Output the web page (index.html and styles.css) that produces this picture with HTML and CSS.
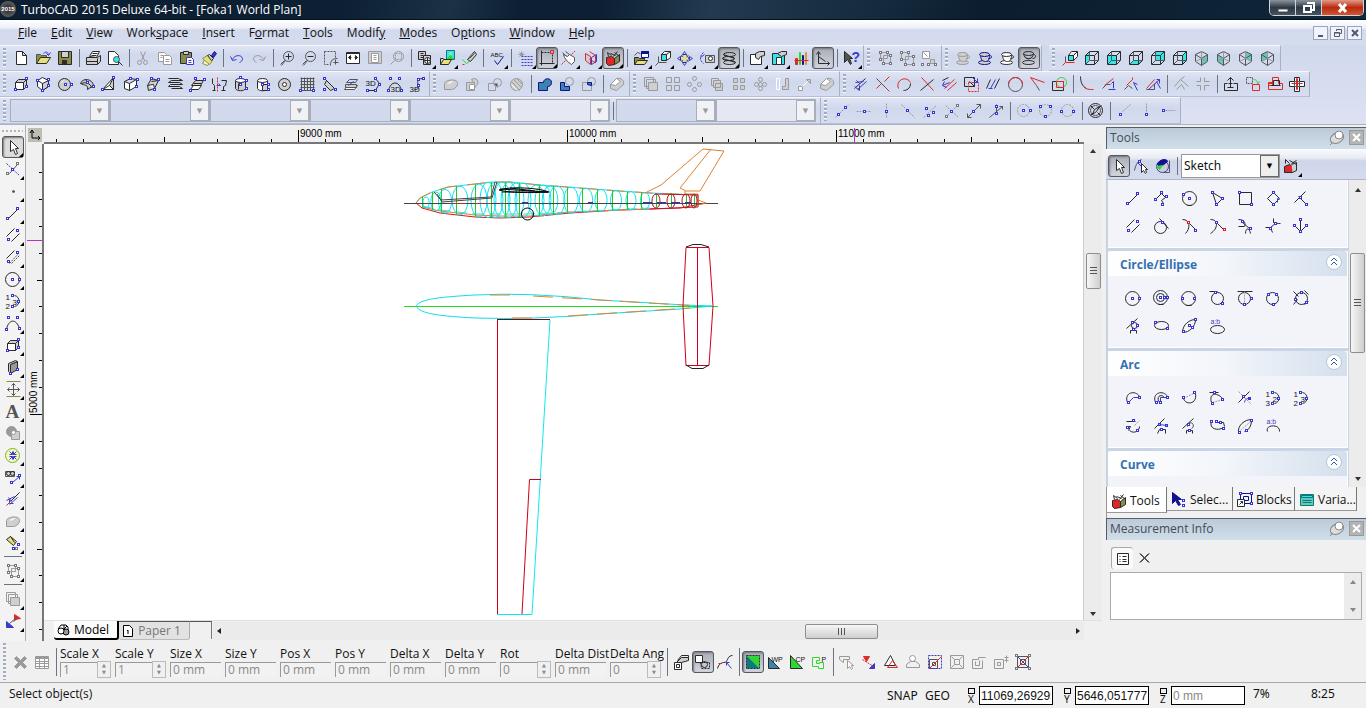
FILE: index.html
```html
<!DOCTYPE html>
<html lang="en">
<head>
<meta charset="utf-8">
<title>TurboCAD 2015 Deluxe 64-bit - [Foka1 World Plan]</title>
<link rel="stylesheet" href="styles.css">
</head>
<body>
<div class="app">
  <header class="titlebar">
    <span class="logo">2015</span>
    <h1 class="title">TurboCAD 2015 Deluxe 64-bit - [Foka1 World Plan]</h1>
    <div class="wincontrols">
      <button class="win" aria-label="Minimize"><svg width="14" height="12"><path d="M2 7h10v3H2z" fill="#fff" stroke="#444"/></svg></button>
      <button class="win" aria-label="Restore"><svg width="14" height="13"><path d="M5 2h7v7H9M2 5h7v6H2z" fill="none" stroke="#fff" stroke-width="2"/></svg></button>
      <button class="win close" aria-label="Close"><svg width="14" height="12"><path d="M3 2l7 8M10 2l-7 8" stroke="#fff" stroke-width="3"/></svg></button>
    </div>
  </header>

  <nav class="menubar" aria-label="Menu">
    <a href="#"><u>F</u>ile</a><a href="#"><u>E</u>dit</a><a href="#"><u>V</u>iew</a><a href="#">Work<u>s</u>pace</a><a href="#"><u>I</u>nsert</a><a href="#">F<u>o</u>rmat</a><a href="#"><u>T</u>ools</a><a href="#">Modif<u>y</u></a><a href="#"><u>M</u>odes</a><a href="#">O<u>p</u>tions</a><a href="#"><u>W</u>indow</a><a href="#"><u>H</u>elp</a>
    <div class="mdi">
      <button aria-label="Minimize document"><svg width="12" height="12"><path d="M3 9h5" stroke="#557" stroke-width="2"/></svg></button>
      <button aria-label="Restore document"><svg width="12" height="12"><path d="M4.500 4V2.500h5v4H8M2.500 5.500h5v4h-5zM2 6h6" fill="none" stroke="#557"/></svg></button>
      <button aria-label="Close document"><svg width="12" height="12"><path d="M3 3l6 6M9 3l-6 6" stroke="#557" stroke-width="2"/></svg></button>
    </div>
  </nav>

  <div class="bars">
    <div class="row">
      <div class="bar" data-tools="new open save | print preview | cut copy paste brush | undo redo | zoomin zoomout zoomwin extents page full | views&gt; image&gt; pick | spell&gt; | grid&gt; ortho*&gt; hand&gt; planes&gt; toolbox*&gt; | folder&gt; ucs&gt; orbit&gt; camera&gt; spring*&gt; | sheet&gt; sheet2&gt; palette axes* | help&gt;"></div>
      <div class="bar" data-tools="group ungroup explode"></div>
      <div class="bar" data-tools="cupgrey cupblue cup cupwire*"></div>
      <div class="bar spaced" data-tools="ucs2 cubeleft cubefront cubebottom cubeback cuberight iso1 iso2 iso3 iso4"></div>
    </div>
    <div class="row">
      <div class="bar" data-tools="box rotbox sphere torus2 wedge prism revolve helix sweep glass cyl cyl2 torus mesh tri stack d3line d3curve d3spline"></div>
      <div class="bar" data-tools="blob bsub bint hatchball | union subtract intersect | fillet3d"></div>
      <div class="bar" data-tools="copies array radial copies2 array2 radial2 mirrorg scaleg fillet3d"></div>
      <div class="bar" data-tools="offset trim arcred cross multi stretch parallel circlered angle over | filletc chamf1 chamf2 chamf3 | meetg crossg | lift align stamp pill"></div>
    </div>
    <div class="row">
      <div class="bar combos">
        <span class="combo"><select disabled aria-label="Layer"></select></span>
        <span class="combo"><select disabled aria-label="Color"></select></span>
        <span class="combo"><select disabled aria-label="Style"></select></span>
        <span class="combo"><select disabled aria-label="Width"></select></span>
        <span class="combo"><select disabled aria-label="Pattern"></select></span>
        <span class="combo pale"><select disabled aria-label="Brush"></select></span>
        <span class="sep"></span>
        <span class="combo"><select disabled aria-label="Material"></select></span>
        <span class="combo pale"><select disabled aria-label="Workplane"></select></span>
      </div>
      <div class="bar" data-tools="sn1 sn2 sn3 sn4 sn5 sn6 sn7 sn8 | sc1 sc2 sc3 | compass | sn9 sn10 sn11"></div>
    </div>
  </div>

  <main class="main">
    <div class="side" data-tools="arrow*&gt; snapx&gt; dot&gt; line&gt; dbl&gt; dbldash&gt; circ&gt; arc123&gt; curve&gt; box&gt; slab&gt; move&gt; text&gt; bool&gt; target&gt; cam2&gt; offset2&gt; blob&gt; flash&gt; | group&gt; | copies&gt; swap&gt;"></div>

    <section class="doc" aria-label="Drawing">
      <div class="corner"><svg width="14" height="14"><path d="M4 3v7h8M2 5l2-3 2 3M10 8l2 2-2 2" fill="none" stroke="#000"/></svg></div>
      <svg class="hruler" id="hruler" aria-hidden="true"></svg>
      <svg class="vruler" id="vruler" aria-hidden="true"></svg>
      <svg class="canvas" id="canvas" role="img" aria-label="Foka1 plan"></svg>
      <div class="vscroll docv"><i class="up"></i><i class="thumb"></i><i class="down"></i></div>
      <div class="sheets">
        <button class="sheet on"><svg width="13" height="13"><path d="M4 2h5l2 2v4H3L1 6z" fill="#fff" stroke="#000"/><path d="M1 6h6V2M7 6l3-3" fill="none" stroke="#000"/><circle cx="9" cy="9" r="3" fill="#999" stroke="#000"/><circle cx="4" cy="8" r="3" fill="#fff" stroke="#000"/></svg>Model</button>
        <button class="sheet"><svg width="12" height="13"><path d="M1.500 1.500h6l3 3v8h-9zM6 6v4M5 7l1-1" fill="#fff" stroke="#000"/></svg>Paper 1</button>
        <span class="sheetline"></span>
        <div class="hscroll"><i class="left"></i><i class="hthumb"></i><i class="right"></i></div>
      </div>
    </section>

    <aside class="panels">
      <div class="phead"><h2>Tools</h2><svg width="18" height="18"><path d="M2 16l5-5" stroke="#888"/><ellipse cx="9" cy="9" rx="7" ry="5" transform="rotate(-25 9 9)" fill="#ddd" stroke="#888"/><circle cx="11" cy="6" r="4" fill="#fff" stroke="#888"/></svg><button class="pclose" aria-label="Close Tools"><svg width="13" height="13"><path d="M3 3l7 7M10 3l-7 7" stroke="#fff" stroke-width="2"/></svg></button></div>
      <div class="ptools">
        <div class="plain" data-tools="arrow* nodearrow refresh |"></div>
        <span class="skcombo"><select aria-label="Tool set"><option>Sketch</option></select></span>
        <div class="plain" data-tools="toolbox2&gt;"></div>
      </div>
      <div class="pbody">
        <div class="cards">
          <section class="card first"><div class="grid" data-tools="line poly circ3 polygon rect rrect perp dbl tang tanarc tanarc2 tan2 tan3 anchor"></div></section>
          <section class="card"><h3>Circle/Ellipse<button aria-label="Collapse Circle/Ellipse"><svg width="14" height="14"><path d="M4 6l3-3 3 3M4 10l3-3 3 3" fill="none" stroke="#1f5f9f"/></svg></button></h3><div class="grid" data-tools="circ concentric circ2p circtan circtan2 circ3p circtan3 circtt ell ellrot ellratio"></div></section>
          <section class="card"><h3>Arc<button aria-label="Collapse Arc"><svg width="14" height="14"><path d="M4 6l3-3 3 3M4 10l3-3 3 3" fill="none" stroke="#1f5f9f"/></svg></button></h3><div class="grid" data-tools="arc1 arcc arc2 arctan arctan2 arc132 arc123 arc3t arctt arctt2 arcell arcrot arcratio"></div></section>
          <section class="card"><h3>Curve<button aria-label="Collapse Curve"><svg width="14" height="14"><path d="M4 6l3-3 3 3M4 10l3-3 3 3" fill="none" stroke="#1f5f9f"/></svg></button></h3><div class="grid"></div></section>
        </div>
        <div class="vscroll panelv"><i class="up"></i><i class="thumb"></i><i class="down"></i></div>
      </div>
      <div class="ptabs">
        <button class="ptab on" data-icon="toolbox">Tools</button>
        <button class="ptab" data-icon="select">Selec...</button>
        <button class="ptab" data-icon="blocks">Blocks</button>
        <button class="ptab" data-icon="calc">Varia...</button>
      </div>
      <div class="phead"><h2>Measurement Info</h2><svg width="18" height="18"><path d="M2 16l5-5" stroke="#888"/><ellipse cx="9" cy="9" rx="7" ry="5" transform="rotate(-25 9 9)" fill="#ddd" stroke="#888"/><circle cx="11" cy="6" r="4" fill="#fff" stroke="#888"/></svg><button class="pclose" aria-label="Close Measurement Info"><svg width="13" height="13"><path d="M3 3l7 7M10 3l-7 7" stroke="#fff" stroke-width="2"/></svg></button></div>
      <div class="mtools" data-tools="list delete"></div>
      <div class="mbox"><textarea aria-label="Measurement Info"></textarea><div class="vscroll mv"><i class="up"></i><i class="down"></i></div></div>
    </aside>
  </main>

  <div class="inspector">
    <div class="plain" data-tools="xgrey table |"></div>
    <label class="field spin">Scale X<input type="text" value="1" disabled></label>
    <label class="field spin">Scale Y<input type="text" value="1" disabled></label>
    <label class="field">Size X<input type="text" value="0 mm" disabled></label>
    <label class="field">Size Y<input type="text" value="0 mm" disabled></label>
    <label class="field">Pos X<input type="text" value="0 mm" disabled></label>
    <label class="field">Pos Y<input type="text" value="0 mm" disabled></label>
    <label class="field">Delta X<input type="text" value="0 mm" disabled></label>
    <label class="field">Delta Y<input type="text" value="0 mm" disabled></label>
    <label class="field spin">Rot<input type="text" value="0" disabled></label>
    <label class="field">Delta Dist<input type="text" value="0 mm" disabled></label>
    <label class="field spin">Delta Ang<input type="text" value="0" disabled></label>
    <div class="plain" data-tools="| chain selbox* spl | win* winwp wincp winp | backsel scat tris hat xform keep bend mvup xall"></div>
  </div>

  <footer class="status">
    <span class="hint">Select object(s)</span>
    <span class="mode">SNAP</span><span class="mode">GEO</span>
    <label class="coord"><span><i></i>X</span><input type="text" value="11069,269295"></label>
    <label class="coord"><span><i></i>Y</span><input type="text" value="5646,051777 mm"></label>
    <label class="coord"><span><i></i>Z</span><input type="text" value="0 mm" disabled></label>
    <span class="zoom">7%</span><span class="clock">8:25</span>
  </footer>
</div>
<script src="app.js"></script>
</body>
</html>
```

FILE: styles.css
```css
* { box-sizing: border-box; }
body {
  margin: 0;
  font: 12px/16px "Noto Sans", "Open Sans", sans-serif;
  color: #111;
  background: #f0f0f0;
}
button, input, select, textarea { font: inherit; color: inherit; margin: 0; }
button { padding: 0; border: 0; background: none; }
svg { display: block; flex: none; }
.app { display: flex; flex-direction: column; height: 100vh; overflow: hidden; }

.titlebar {
  display: flex;
  align-items: flex-start;
  height: 20px;
  border-bottom: 1px solid #04101c;
  background: linear-gradient(100deg, #0d2033 0 25%, #1b3144 33%, #0d2033 38% 44%, #223a50 52%, #14293c 65%, #0b1d2e 72%, #10263a);
}
.logo {
  width: 16px;
  height: 16px;
  margin: 1px 5px 0 0;
  border-radius: 50%;
  background: radial-gradient(#222, #777);
  color: #fff;
  font: bold 6px/16px "Liberation Sans", sans-serif;
  text-align: center;
}
.title { margin: 1px 0 0; font-size: 12px; line-height: 17px; font-weight: 400; color: #fff; font-family: "Open Sans", sans-serif; }
.wincontrols { display: flex; margin: 0 2px 0 auto; border: 1px solid #cdd5dc; border-top: 0; border-radius: 0 0 5px 5px; overflow: hidden; }
.win { display: grid; place-items: center; width: 26px; height: 15px; border-right: 1px solid #cdd5dc; background: linear-gradient(#8a949d, #2c3945 50%, #47545f); }
.win.close { width: 41px; border: 0; background: linear-gradient(#e09a88, #b92b10 50%, #d4552f); }

.menubar { display: flex; align-items: center; gap: 14px; height: 25px; padding: 0 4px 0 18px; background: linear-gradient(#fff, #eef1f9 30%, #d3daed 40%, #d5dcee); }
.menubar a { color: #111; text-decoration: none; font-family: "Open Sans", sans-serif; }
.mdi { display: flex; gap: 2px; margin-left: auto; }
.mdi button { display: grid; place-items: center; width: 15px; height: 14px; border: 1px solid #9aa5bd; background: #f0f3fa; }

.bars { background: linear-gradient(#d0d8ec, #dde2f3); border-bottom: 1px solid #a9b3c4; }
.row { display: flex; height: 26px; }
.row:last-child { height: 27px; }
.bar {
  display: flex;
  align-items: center;
  padding: 0 1px 0 10px;
  border-right: 1px solid #a8b0c4;
  border-top: 1px solid #f6f8fd;
  border-bottom: 1px solid #b7bfd2;
  background: linear-gradient(#e0e5f4, #d0d8ec 40%, #d6ddf0);
  position: relative;
}
.bar::before, .inspector::before {
  content: "";
  position: absolute;
  left: 3px;
  top: 2px;
  bottom: 2px;
  width: 3px;
  background: repeating-linear-gradient(#a3abc0 0 2px, #f6f8fd 2px 3px, transparent 3px 4px);
}
.spaced { margin-left: 7px; }
.plain { display: flex; align-items: center; }
.tool { position: relative; display: grid; place-items: center; flex: none; width: 22px; height: 22px; border-radius: 3px; }
.pressed { border: 1px solid #55595f; background: linear-gradient(#a9adb8, #d2d5de); box-shadow: inset 1px 1px 2px #777; }
.fly::after { content: ""; position: absolute; right: 0; bottom: 0; border: 2px solid transparent; border-right-color: #000; border-bottom-color: #000; }
.sep { flex: none; width: 1px; height: 18px; margin: 0 2px 0 3px; background: #6c7484; }
.combos { padding-right: 4px; }
.combo { position: relative; flex: none; width: 100px; height: 23px; border: 1px solid #a8aebc; }
.combo select { width: 100%; height: 100%; border: 0; background: #d1d9ed; appearance: none; display: block; }
.combo.pale select { background: #eceef3; }
.combo::after, .skcombo::after {
  content: "▼";
  position: absolute;
  right: 0;
  top: 0;
  bottom: 0;
  width: 17px;
  border: 1px solid #a8aebc;
  background: #f1f2f5;
  color: #999;
  font: 7px/20px "DejaVu Sans", sans-serif;
  text-align: center;
  pointer-events: none;
}

.main { flex: 1; min-height: 0; display: grid; grid-template-columns: 26px 1fr 260px; background: #f0f0f0; }
.side { position: relative; display: flex; flex-direction: column; align-items: center; padding: 11px 0 0 1px; border-right: 1px solid #b0b0b0; background: #f3f3f3; overflow: hidden; }
.side::before { content: ""; position: absolute; top: 5px; left: 2px; right: 2px; height: 2px; background: repeating-linear-gradient(90deg, #b5b5b5 0 2px, transparent 2px 4px); }
.side .sep { width: 18px; height: 1px; margin: 2px 0 3px; }
.side .pressed { background: #dcdcdc; }

.doc { display: grid; grid-template: 17px 1fr 21px / 17px 1fr 18px; padding: 2px 4px 0 1px; min-width: 0; min-height: 0; }
.corner { width: 14px; height: 14px; margin: 1px; background: #bdbdb4; }
.hruler { width: 100%; height: 17px; grid-column: 2; border-bottom: 2px solid #777; background: #f0f0f0; }
.vruler { width: 17px; height: 100%; grid-row: 2 / 4; grid-column: 1; border-right: 2px solid #777; }
.canvas { width: 100%; height: 100%; grid-row: 2; grid-column: 2; background: #fff; border-right: 1px solid #ccc; min-height: 0; }
.hruler text, .vruler text { font: 10px "Liberation Sans", sans-serif; }
.vscroll { display: flex; flex-direction: column; align-items: center; justify-content: space-between; position: relative; background: #ececec; }
.docv { grid-row: 2; grid-column: 3; padding: 5px 0 4px; }
.up, .down, .left, .right { width: 0; height: 0; border: 3px solid transparent; }
.up { border-top: 0; border-bottom: 4px solid #333; }
.down { border-bottom: 0; border-top: 4px solid #333; }
.left { border-left: 0; border-right: 4px solid #222; }
.right { border-right: 0; border-left: 4px solid #222; }
.thumb { position: absolute; top: 23%; width: 15px; height: 36px; border: 1px solid #8e8e8e; border-radius: 2px; background: repeating-linear-gradient(#555 0 1px, transparent 1px 3px) center / 7px 8px no-repeat, linear-gradient(90deg, #f6f6f6, #cfcfcf); }
.sheets { grid-row: 3; grid-column: 2 / 4; display: flex; align-items: flex-start; padding-left: 10px; border-top: 1px solid #e0e0e0; }
.sheet { display: flex; align-items: center; gap: 4px; height: 19px; padding: 0 8px 0 3px; border-right: 1px solid #aaa; border-bottom: 1px solid #bbb; border-radius: 0 0 3px 3px; background: #e2e2e2; color: #777; border-top: 1px solid #555; font-family: "Open Sans", sans-serif; }
.sheet.on { border-right: 2px solid #000; border-bottom: 2px solid #000; border-top: 0; background: #fbfbfb; color: #000; }
.sheetline { width: 22px; height: 18px; border-top: 1px solid #555; border-right: 1px solid #777; margin-right: 1px; }
.hscroll { position: relative; flex: 1; display: flex; align-items: center; justify-content: space-between; height: 18px; margin: 1px 18px 0 0; padding: 0 4px; background: #ebebeb; }
.hthumb { position: absolute; left: 68%; width: 73px; height: 15px; border: 1px solid #8e8e8e; border-radius: 2px; background: repeating-linear-gradient(90deg, #555 0 1px, transparent 1px 3px) center / 8px 7px no-repeat, linear-gradient(#f6f6f6, #cfcfcf); }

.panels { display: flex; flex-direction: column; min-height: 0; padding-top: 2px; }
.phead { display: flex; align-items: center; flex: none; height: 22px; padding: 0 2px 2px 3px; border-top: 1px solid #555d66; border-left: 1px solid #555d66; background: linear-gradient(#bccad9, #cfdfe9); }
.phead h2 { margin: 0 auto 0 0; font: 12px/16px "Open Sans", sans-serif; color: #444c55; }
.pclose { display: grid; place-items: center; width: 15px; height: 15px; margin-left: 3px; border: 1px solid #999; background: #b4b4b4; }
.ptools { display: flex; align-items: center; flex: none; height: 31px; padding: 3px 0 0 2px; border-bottom: 1px solid #b0b6c4; background: linear-gradient(#fbfbfd, #e8ebf4 30%, #cfd6ea 40%, #d4dbee); }
.skcombo { position: relative; width: 99px; height: 24px; margin-left: 1px; border: 1px solid #999; }
.skcombo select { width: 100%; height: 100%; padding: 0 2px; border: 0; appearance: none; background: #fff; }
.skcombo::after { color: #000; border-color: #666; background: #eee; }
.pbody { flex: none; height: 307px; display: flex; background: #f0f0f0; border-left: 1px solid #c4cfe0; overflow: hidden; }
.cards { width: 242px; overflow: hidden; background: #c9d5e4; padding-left: 1px; }
.card { background: #f3f4f9; border: solid #fff; border-width: 0 1px 1px 0; margin: 0 1px 3px 0; }
.card h3 { display: flex; align-items: center; justify-content: space-between; height: 25px; margin: 0; padding: 2px 5px 0 12px; font-size: 12px; font-weight: 700; color: #3470b2; background: linear-gradient(90deg, #fff, #f2f5fa 50%, #d4dfed); border-radius: 4px 4px 0 0; font-family: "Open Sans", sans-serif; }
.card h3 button { display: grid; place-items: center; width: 16px; height: 16px; border: 1px solid #b8c6d8; border-radius: 50%; background: #fff; margin-bottom: 6px; }
.grid { display: grid; grid-template-columns: repeat(7, 28px); grid-auto-rows: 28px; place-items: center; min-height: 71px; align-content: start; padding: 8px 0 7px 11px; }
.first .grid { padding-top: 4px; min-height: 67px; }
.panelv { flex: 1; padding: 8px 0 6px; }
.panelv .thumb { top: 73px; height: 100px; }
.ptabs { display: flex; align-items: flex-start; flex: none; height: 31px; border-left: 1px solid #999; }
.ptab { display: flex; align-items: center; gap: 3px; width: 66px; height: 24px; padding: 2px 0 0 3px; border-right: 1px solid #777; border-bottom: 1px solid #999; overflow: hidden; white-space: nowrap; background: #f4f4f4; font-family: "Open Sans", sans-serif; }
.ptab svg { width: 18px; margin-right: -1px; }
.ptab.on { width: 60px; height: 26px; background: #fff; }
.ptab:nth-child(3), .ptab:last-child { width: 62px; }
.mtools { display: flex; flex: none; padding: 7px 5px 3px; }
.mtools .tool:first-child { border: solid #aaa; border-width: 1px 0 0 1px; background: #fafafa; }
.mbox { display: flex; flex: none; height: 48px; margin: 0 4px; border: 1px solid #aaa; background: #fff; }
.mbox textarea { flex: 1; min-width: 0; border: 0; resize: none; background: #fff; }
.mv { width: 17px; padding: 7px 0; }
.mv .up { border-bottom-color: #888; }
.mv .down { border-top-color: #888; }

.inspector { position: relative; display: flex; align-items: center; flex: none; height: 42px; padding-left: 9px; border-bottom: 1px solid #a8a8a8; background: #f0f0f0; }
.inspector .sep { height: 28px; }
.field { position: relative; flex: none; display: block; width: 55px; height: 32px; padding-left: 1px; overflow: hidden; white-space: nowrap; font: 12px/16px "Open Sans", sans-serif; }
.field input { display: block; width: 51px; height: 15px; padding: 0 2px; border: solid #999; border-width: 1px 0 0 1px; background: #f2f2f2; color: #8a8a8a; }
.field.spin::after { content: "▲\A▼"; white-space: pre; position: absolute; right: 3px; bottom: 0; width: 12px; height: 15px; border: 1px solid #bbb; background: #f0f0f0; color: #888; font: 5px/7px "DejaVu Sans", sans-serif; text-align: center; }
.status { display: flex; align-items: center; flex: none; height: 25px; padding: 0 0 0 9px; }
.hint { margin-right: auto; padding-bottom: 3px; font-family: "Open Sans", sans-serif; }
.mode { width: 38px; }
.coord { display: flex; align-items: center; width: 96px; padding-left: 5px; }
.coord span { width: 11px; font-size: 10px; line-height: 10px; }
.coord i { display: block; width: 7px; height: 6px; border: 1px solid #000; }
.coord input { width: 74px; height: 19px; padding: 0 1px; border: 1px solid #000; background: #fff; font: 12px/16px "Liberation Sans", sans-serif; }
.coord input:disabled { color: #888; }
.zoom { width: 60px; padding: 0 0 4px 2px; }
.clock { width: 55px; padding-bottom: 4px; }
```

FILE: app.js
```js
/* Icons on a 16-unit grid. Each part is "<stroke><fill><d=dashed> path";
   O cx cy r draws a circle, E cx cy rx ry an ellipse, n/m/N lists square nodes. */
const COLOURS = { k: '#2a2a2a', b: '#3a3ad0', r: '#e02828', g: '#9a9a9a', w: '#fff', c: '#35e6e6', t: '#3c84ac',
  y: '#e6e07a', l: '#cfcfcf', v: '#2fd82f', o: '#8c8c4a', h: '#555', d: '#0a7a7a', n: '#101090', e: '#e09040', i: '#66c8b8', s: '#f4f8c8', x: '#7bb51e' };

const cube = 'k M1 5H10V14H1ZM5 1H14V10M1 5L5 1M10 5L14 1M10 14L14 10;h M5 1V10H14M1 14L5 10';
const iso = 'h M7 1L13 4V11L7 15L1 11V4Z;h M1 4L7 8L13 4M7 8V15;g M7 1V8M1 11L7 8L13 11';
const cups = (s, f) => `${s}${f} E 7 12 6 2;${s}${f} M3 4C3 9 5 11 8 11S12 9 12 4Z;${s}${f} E 7 4 5 2;${s} M12 5C15 5 15 8 11 8`;
const three = (a, b) => `k M9 2C15 3 15 12 9 13;T 0 6 8 1;T 0 15 8 ${a};T 7 11 8 ${b};n 7 2 13 8 7 13`;

const ICONS = {
  new: 'kw M3 1H9L13 5V14H3ZM9 1V5H13',
  open: 'ho M1 13V4H5L6 5H11V8;ky M1 13L5 7H15L11 13Z;b M8 3C10 1 12 1 13 4M11 3L13 5L15 2',
  save: 'ko M1 1H14V14H1Z;kl M4 1H11V7H4Z;kk M5 10H9V14H5Z',
  print: 'kw M4 6L7 1H14L11 7Z;kl M1 7H12L15 5V11L12 14H1Z;k M12 8V14M1 11H12M7 3H12M6 5H11',
  preview: 'kw M1 1H7L11 5V14H1Z;hc O 9 9 3;kk M11 11L15 15',
  cut: 'g M5 1L9 10M10 1L6 10;g O 4 12 2;g O 10 12 2',
  copy: 'gw M1 2H7L9 4V11H1Z;gw M6 5H12L14 7V14H6Z;g M8 9H12M8 11H12M3 5H6M3 7H5',
  paste: 'ko M1 2H12V13H1Z;kl M4 1H9V4H4Z;bw M7 7H12L14 9V14H7Z;b M9 10H12M9 12H12',
  brush: 'os M1 13L5 6L10 10L6 15Z;oy M1 8L6 5L11 10L8 14Z;kl M6 5L8 4L12 8L10 10Z;nb M10 5L13 1L15 3L12 7Z',
  undo: 'b M1 6L3 10L7 9M3 9C5 4 12 4 13 8C13 10 12 11 10 12',
  redo: 'g M14 6L12 10L8 9M12 9C10 4 3 4 2 8C2 10 3 11 5 12',
  zoomin: 'h O 9 6 5;h M5 10L1 14M6 10L2 15;k M9 3V9M6 6H12',
  zoomout: 'h O 9 6 5;h M5 10L1 14M6 10L2 15;k M6 6H12',
  zoomwin: 'hd M1 1H12V7M1 1V14H5;h M7 15C7 10 9 8 14 8;h M10 12H15M12 9V14',
  extents: 'kw M1 2H14V13H1Z;k M1 3H14M1 5V5;kk M3 7L5 5V9ZM12 7L10 5V9Z;k M3 7H6M9 7H12',
  page: 'gl M1 1H14V13H1Z;gw M4 3H11V12H4Z;g M6 5H9M6 7H9M6 9H9',
  full: 'g O 9 6 5;g M5 10L1 14;gd M6 3H12V9H6Z',
  views: 'kl M1 1H8V9H1Z;k M3 3H6M3 5H6M3 7H6;kl M6 5H13V14H6Z;kw O 10 10 3;k M10 7V13M7 10H13',
  image: 'dc M7 0H15V9H7Z;y O 11 3 1;vv M8 8L11 5L14 8Z;ky M1 14L4 9H12L9 14Z;k M1 14V8H4',
  pick: 'kl M6 9L13 1L15 4L9 11Z;h M8 8L13 3;v M1 9L5 13L8 11;r M1 14H3',
  spell: 'T 1 6 6 ABC;n M5 10L8 14L14 6',
  grid: 'bd M4 6H15M4 9H15M4 12H15M4 15H15;g M4 1V6M1 4H7M2 2L6 6M6 2L2 6',
  ortho: 'k M2 0V15M0 13H15;kd M2 2H11M13 4V13;r M11 0H14V3H11Z',
  hand: 'rd M0 14L5 9M10 4L14 0;hw M2 4L6 6L8 4L13 7V11L10 14L6 11L3 7Z;h M1 2L5 6M4 1L8 4',
  planes: 'rl M2 3L7 6V14L2 10Z;r M6 1L12 5V12L6 9;b M8 7L13 4V11L8 14Z',
  toolbox: 'kr M1 7L6 6L9 8V14L3 15L1 13Z;ko M9 8L14 4V11L9 14Z;k M3 6L2 2L6 5M8 6L12 1M5 3L10 5M9 2L14 6',
  folder: 'ko M1 14V7H5L6 8H11V10;ky M1 14L4 10H14L11 14Z;nw M8 1H15V7H8Z;nn M8 1H15V3H8Z;h M1 5L4 2L7 3',
  ucs: 'kc M6 4H11V10H6Z;kw M6 4L9 1H15V7L11 10V4L15 1M6 4H11;h M3 6V12H11M3 12L0 15',
  orbit: 'b M7 1L5 4H9ZM7 15L5 12H9ZM0 8L3 6V10ZM15 8L12 6V10Z;h M4 5L11 11M11 5L4 11;yy O 7 8 2;kd O 7 8 4',
  camera: 'hl M6 5H15V12H6Z;kw O 11 8 2;bd M4 2C0 5 0 10 4 13;b M1 7L5 4',
  spring: 'k E 8 4 6 2;k E 7 8 6 2;k E 8 12 6 2;k M2 4L13 8M1 8L14 12',
  sheet: 'kw M1 4H12V14H1Z;kl M6 3L10 1H15V5L11 6L9 9L6 7Z',
  sheet2: 'kc M1 3H13V14H1Z;kw M5 7H10V14H5Z;kl M6 3L10 1H15V4L10 6Z',
  palette: 'rr M2 8H4V14H2Z;vv M6 2H7V14H6Z;nn M9 5H10V14H9Z;ee M12 2H13V14H12Z;r M1 10H15',
  axes: 'k M3 2V13H14M3 6L10 11M1 4L3 1L5 4M12 11L14 13L12 15',
  help: 'kh M1 1V12L4 9L7 14L8 13L6 8H9Z;T 8 11 14 ?:b',
  group: 'g M3 2H10V8H3ZM6 5H13V13H6Z;m 3 2 10 2 3 9 6 13 13 13 13 5',
  ungroup: 'g M2 2H9V9H2ZM6 6H14V14H6Z;m 2 2 9 2 2 9 14 14 14 6 6 14',
  explode: 'gw M1 1H8V8H1Z;g M2 2L6 6;gl M9 9H13V13H9Z;m 1 14 7 14 14 14',
  cupgrey: cups('g', 'l'), cupblue: cups('n', 'l'), cup: cups('k', 'w'),
  cupwire: 'k E 7 3 5 2;k M2 3C3 10 11 10 12 3M3 6C5 9 9 9 11 6;k M12 4C15 4 15 8 11 8;k E 7 12 6 2',
  ucs2: 'kc M6 5H11V10H6Z;kw M6 5L9 1H15V6L11 10V5L15 1M6 5H11;h M3 6V12;r M3 12H12M3 12L0 15',
  cubeleft: '-c M1 5L5 1V10L1 14Z;' + cube, cubefront: '-c M1 5H10V14H1Z;' + cube,
  cubebottom: '-c M1 14L5 10H14L10 14Z;' + cube, cubeback: '-c M5 1H14V10H5Z;' + cube,
  cuberight: '-c M10 5L14 1V10L10 14Z;' + cube,
  iso1: '-i M7 8L13 4V11L7 15Z;' + iso, iso2: '-i M1 4L7 8V15L1 11Z;' + iso,
  iso3: '-i M7 1L13 4V11L7 8Z;' + iso, iso4: '-i M1 4L7 1V8L1 11Z;' + iso,

  box: 'kl M2 6L5 3H13V10L10 13H2Z;kw M2 6H10V13H2Z;k M10 6L13 3;n 2 13 13 2 13 10',
  rotbox: 'kw M7 1L13 4V10L7 14L2 10V4Z;kl M7 7L13 4V10L7 14Z;k M2 4L7 7V14;n 2 4 13 3 13 9 7 14',
  sphere: 'kl O 7 8 6;w M4 6L6 4;n 8 8 14 8',
  torus2: 'kl M1 7C3 1 13 2 14 9L8 13C9 8 5 9 1 7Z;k M2 7C6 5 11 7 12 11M6 3L9 7;n 8 6 14 10',
  wedge: 'kw M1 13L12 1V13Z;kl M12 1L8 9L12 13Z;k M1 13L8 9;n 12 1 1 13',
  prism: 'kw M1 5L6 7L6 14L1 12ZM6 7L13 3V10L6 14;k M1 5L7 2L13 3;n 7 2 14 3 13 10',
  revolve: 'kl M2 9L6 2L13 4L9 12L3 14Z;kw M6 5L13 4M2 9L8 8L9 12;n 13 3 6 2 9 13',
  helix: 'k M1 2H11L15 4H4L1 6H12L15 8H3L1 10H12L15 12H4',
  sweep: 'kl M2 9L6 4H14L11 9ZM4 7H12;kw M1 13L4 9H12L9 13Z;n 6 2 15 3 1 14',
  glass: 'rd M6 1V15;k M1 2V7L3 9V14M1 14H4;k M10 4H15L14 9L12 10V14M10 14H14;b M5 9H9L7 7',
  cyl: 'kl M2 4V12C3 15 11 15 12 12V4;kw E 7 4 5 2;k M5 7V13;n 7 1 13 4 13 12 7 8',
  cyl2: 'kw M2 4V12C3 15 11 15 12 12V4;kw E 7 4 5 2;kl M7 8H12V14H7Z;n 13 8 7 8 13 13',
  torus: 'kl O 7 8 6;kw O 7 8 2', mesh: 'h M2 1V14M5 1V14M8 1V14M11 1V14M14 1V14M1 2H15M1 5H15M1 8H15M1 11H15M1 14H15;n 1 14 14 14',
  tri: 'kl M5 4L13 12L9 14L3 8Z;k M3 2L14 13;n 3 2 3 13 14 13', stack: 'hw M1 13L4 9H14L11 13Z;hl M2 8H13V11H2Z;h M3 6L6 3H14L12 6Z;b M5 9L10 5',
  d3line: 'T 0 9 8 3D;k M2 14H10L14 7L10 2;n 2 14 10 14 14 8 10 2',
  d3curve: 'T 3 15 8 3D;k M1 14C3 4 12 4 14 14;n 3 2 12 2 1 14 14 14',
  d3spline: 'T 0 15 8 3D;k M14 2C5 2 9 7 9 10S7 13 5 13;n 14 2 9 3 9 9',
  blob: 'gl M1 13V7C2 3 13 2 14 6C15 9 11 13 8 13Z;-w M4 8C5 5 8 4 10 5Z',
  bsub: 'gl M6 3C10 0 15 5 11 9L8 13V6Z;gl M1 6H9V14H1Z;gw M4 8H9V13H4Z',
  bint: 'g O 10 6 4;g M1 7H8V14H1Z;gh M6 7H10V11Z',
  hatchball: 'gl O 7 8 6;g M2 5L10 14M4 3L12 11M7 2L13 8;w M2 8L8 14',
  union: 'nt M1 6H6C6 1 14 1 14 6C14 9 12 10 10 10V14H1Z', subtract: 'nt M1 6H5V10H10V14H1Z;g O 10 5 4',
  intersect: 'g O 10 5 4;g M1 6H10V14H1Z;nt M6 6H10V9L6 8Z', fillet3d: 'gl M1 8L7 2C12 1 15 4 14 8L7 14L1 12Z;gw M1 8L7 2L11 5L6 9Z',
  copies: 'g M1 1H10V10H1Z;g M3 3H12V12H3Z;gl M5 6H14V14H5Z', array: 'g M1 1H6V6H1ZM9 1H14V6H9ZM1 9H6V14H1ZM9 9H14V14H9Z',
  radial: 'g O 7 2 2;g O 2 8 2;g O 12 8 2;g O 7 13 2', copies2: 'g M2 2H9V9H2Z;gl M4 4H11V11H4ZM6 7H13V14H6Z',
  array2: 'gl M2 2H6V6H2ZM9 2H13V6H9ZM2 9H6V13H2ZM9 9H13V13H9Z', radial2: 'g O 7 3 2;g O 3 8 2;g O 11 8 2;g O 7 12 2;g O 7 8 2',
  mirrorg: 'w M1 2H4V13H1Z;gl M10 2H13V13H7V10H10Z', scaleg: 'gw M1 10H5V14H1Z;gl M9 3H13V7Z;w M5 10L10 5',
  offset: 'k M1 12L12 2;b M2 6L10 5M4 13L13 5M3 4L6 7M1 10L6 14M6 14V9', trim: 'r M1 12L6 7M9 5L14 0M8 9L14 15;h M1 2L10 11',
  arcred: 'r M1 12A6 6 0 0 1 13 6;k M13 7C13 12 9 14 6 14', cross: 'r M2 1L14 14;k M1 14L14 3',
  multi: 'k M1 4L7 1;r M3 12L13 3M6 14L15 6;b M1 9L8 6M3 5L1 9L5 11', stretch: 'k M1 1H11V10H1ZM6 5L11 10;rd M5 6H15V15H5Z;b M9 1L14 6M14 2V6H10',
  parallel: 'k M1 12L5 3M9 12L14 2;b M5 12L10 3M3 12H7', circlered: 'h O 8 8 7;r M1 8A7 7 0 0 1 15 8', angle: 'r M1 1L15 6;r M1 1L7 9;h M7 9L10 14',
  over: 'k M1 5H12V14H1Z;v O 10 6 5;r M5 5H12V11H5Z', filletc: 'k M1 0C1 6 3 10 7 12;r M4 10C7 13 9 13 14 13',
  chamf1: 'r M3 9L12 2;h M1 12L5 8H9;b M7 13H14M12 5V12M12 5L10 7', chamf2: 'r M3 9L9 3V1;h M1 13L5 9L9 12;b M14 14L10 6L14 8', chamf3: 'r M1 12L9 3;h M1 13H9V7;b M3 13L14 3M11 5L15 12M11 3H14V7',
  meetg: 'g M1 10L7 3L11 0M7 3L15 10M3 13L8 8L11 13', crossg: 'g M5 1V5H1M9 1V5H14M1 9H5V14M14 9H9V14',
  lift: 'k M4 7H1V14H14V7H10M7 1V11M4 4L7 1L10 4M4 11H10M5 7L9 7', align: 'hd M1 1H7V7H1Z;v M8 3C12 3 12 6 12 8M14 5L12 8;r M7 8H14V14H7Z',
  stamp: 'ry M1 6H5V9H1Z;r M5 1H11V7H15V13H1V7H5Z;k M6 4H12V9H6ZM4 9H13', pill: 'kw M5 1H10V5H15V10H10V15H5V10H0V5H5Z;r M7 2H8V13H7ZM2 7H13;h M5 5H10V10H5Z',
  sn1: 'gd M1 14L14 1;n 4 11 11 4', sn2: 'gd M0 8H15;n 8 8', sn3: 'gd M8 0V15;n 8 8', sn4: 'gd M1 1L5 5M9 9L14 14;n 7 7', sn5: 'gd M1 14L14 2;n 4 5 11 9 6 12', sn6: 'gd M1 14L14 1M1 2L14 14;n 7 8;m 2 13 13 2',
  sn7: 'h M1 14L14 1M10 1H14V5M1 10V14H5;n 7 8', sn8: 'h M1 14L14 3M8 1V11M11 3H14V6;n 8 3 8 10',
  sc1: 'gd O 7 7 6;n 7 7 14 7', sc2: 'gd O 7 7 6;n 2 3 12 3 7 13', sc3: 'gd O 7 7 6;n 1 8 13 8', compass: 'k O 7 7 7;h O 7 7 5;k M2 2L6 6M13 2L9 6M2 12L5 9M12 12L9 9;k M11 3L8 8L4 11L6 6Z',
  sn9: 'gd M6 8L14 1;n 4 11', sn10: 'gd M8 0V8;n 8 11', sn11: 'gd M5 7H15;n 3 7',

  arrow: 'kw M5 1V12L8 10L10 15L12 14L10 9H13Z', snapx: 'bd M1 2L14 14;h M4 12L12 3;m 2 12 12 2;n 7 8', dot: 'hh O 8 8 1', line: 'k M3 13L13 3;n 2 13 12 3',
  dbl: 'k M1 9L9 1M6 14L14 6;n 3 12 12 3', dbldash: 'k M1 9L9 1;hd M6 14L14 6;hd M4 14L14 3;n 3 12 12 3', circ: 'k O 7 8 7;n 7 8 14 8',
  arc123: three(2, 3), arc132: three(3, 2), curve: 'k M1 14C3 3 11 3 14 13;n 3 2 12 2 1 14 14 13', slab: 'kg M5 5L12 2V10L5 14Z;kl M3 4L10 1L12 2L5 5V14L3 12Z;n 5 14 12 10',
  move: 'h M8 2V14M2 8H14M6 4L8 2L10 4M6 12L8 14L10 12M4 6L2 8L4 10M12 6L14 8L12 10;o M1 0H15M1 15H15', text: 'T 0 14 19 A:h',
  bool: 'gg O 6 6 5;gl M6 6H14V14H6Z;gw O 8 7 2', target: 'xs O 7 8 7;b M4 4L7 7M11 4L8 7M4 12L7 9M11 12L8 9M4 7H7V4M8 4V7H11M4 9H7V12M8 12V9H11',
  cam2: 'hl M0 2H9V7H0Z;k O 3 4 2;k O 7 4 2;b M7 13L14 7M11 7H14V10;n 6 13 14 6', offset2: 'k M5 10L14 1;b M1 9L9 5M4 13L12 6M3 6L6 10M8 12H4V8;r M1 14L4 11',
  flash: 'ky M1 4L5 1L11 6L8 10Z;k M5 1L9 7;n 8 13 13 9;m 11 13', swap: 'rr M9 1L15 5L9 6Z;bb M1 8V14H8Z;h M4 10L10 5M8 8L12 5',
  nodearrow: 'h M1 12C2 6 5 2 8 1;b M4 4L9 9;n 6 3;kw M8 5V14L10 12L12 15L13 14L12 11H14Z', refresh: 'bl O 7 8 6;nn M2 6C4 0 12 0 12 3L7 7L4 8Z;vv M1 8L7 7L4 11Z;h M14 2V14H8',
  toolbox2: 'kr M1 8L6 6L9 8V14L1 14Z;kl M8 6L13 4V12L9 14;k M2 5L2 1L6 5M6 2L13 6M8 5L13 2',
  poly: 'k M2 9L8 3L12 7L8 10L10 13;n 2 9 8 2 13 6 9 14', circ3: 'k O 8 8 7;n 2 4 8 8;k M6 15H10', polygon: 'k M3 2L13 8L7 14Z;n 3 2 13 8 7 14', rect: 'k M2 2H14V14H2Z;n 2 2 14 14',
  rrect: 'k M2 8L8 2L14 8L8 14Z;n 8 2 8 14;b M12 12V8L14 9', perp: 'k M1 12L12 1M5 6L13 14;n 7 7 13 14', tang: 'k O 7 9 6;k M6 0L15 10;n 9 4',
  tanarc: 'k M1 1C9 1 9 10 4 15M7 4L14 11;N 7 4;n 14 12', tanarc2: 'k M1 1C9 1 9 10 1 15M7 4L14 11;n 7 4;N 15 11', tan2: 'k M1 1C8 1 8 6 7 8H1M4 3L13 11M8 15C8 9 12 9 13 15;n 5 3 13 10',
  tan3: 'k M8 0V4L13 5H15M0 9H5L7 14M5 9L10 5;n 5 10 10 5', anchor: 'k M7 1V13M1 7L7 13L13 7;n 7 1 1 7 13 7 7 13',
  concentric: 'k O 7 7 7;k O 7 7 4;n 7 7 11 7 14 7;k M5 14H10', circ2p: 'k O 7 8 7;n 1 8 13 8;k M5 15H10', circtan: 'k O 8 8 6;k M0 1H8;n 6 2 13 13', circtan2: 'k O 7 8 6;k M0 1H15;gd M7 1V13;n 7 14 14 8', circ3p: 'k O 7 8 6;n 3 4 11 4 8 14', circtan3: 'k O 8 8 6;k M0 1L5 6M11 0L15 4M0 14L4 9M11 14L15 11;n 8 2 2 9 13 12',
  circtt: 'k M1 10L12 0;k O 9 7 3;k M5 15V12H11V15;n 7 4 12 7 8 11', ell: 'k E 8 7 7 4;n 2 4 14 10', ellrot: 'k M1 14C1 6 8 1 14 1C14 8 8 14 1 14Z;n 2 13 14 1 8 7 11 9', ellratio: 'k E 8 11 7 4;T 1 5 7 a:b:b',
  arc1: 'k M2 12C-2 2 10 -1 14 6;b M3 12L8 7H14;n 3 12 14 7', arcc: 'k M2 12C-2 2 10 -1 14 6M5 11C3 4 9 4 11 7;b M7 11V7H14;n 3 12 14 7 7 12', arc2: 'k M2 8C4 15 16 14 14 3;gd M2 8L12 3;n 2 7 13 2',
  arctan: 'k M2 12C-1 3 7 1 13 8M0 2H9;gd M3 12L13 9;n 5 2 3 13 13 9', arctan2: 'gd M1 1L14 14;k M1 12L12 1;n 6 6 12 8;b M7 12C8 8 9 8 13 8',
  arc3t: 'k M4 12C9 16 14 12 14 8M1 3H10M1 8H5L3 12;gd M9 7L14 2;n 8 2 2 9 12 12', arctt: 'k M1 10L11 0M4 15L6 11H12V15;n 6 6 13 7 8 11;b M6 6L13 7', arctt2: 'k M1 10L12 0M5 15V12H11V15;h M6 8A3 3 0 1 1 10 10;n 7 6 8 12',
  arcell: 'k M2 3C-1 10 8 13 14 9M8 4H14L15 8;n 2 3 7 3 11 4 14 10', arcrot: 'k M1 14C0 7 7 1 14 1C14 8 11 12 7 13;gd M3 12L13 3;n 2 14 14 2 9 12', arcratio: 'k M2 13C-1 6 15 5 14 13;T 1 5 7 a:b:b',
  select: 'nn M1 0V11L4 8L7 13L9 12L6 7H10Z;n 12 8 12 13', blocks: 'n M3 1H14V11H3ZM6 4H11V8H6Z;n 3 1 14 1 14 11;kw M0 7H7V14H0Z;k M2 12L5 9M3 9H5V11', calc: 'di M1 2H14V13H1Z;dc M2 3H13V5H2Z;d M3 8H12M3 10H12',
  list: 'kw M2 2H13V13H2Z;k M4 5H5M7 5H11M4 8H5M7 8H11M4 10H5M7 10H11', delete: 'h M3 3L12 12M4 3L13 12M12 3L3 12M13 3L4 12',
  xgrey: 'gg M2 4L4 2L8 6L12 2L14 4L10 8L14 12L12 14L8 10L4 14L2 12L6 8Z', table: 'gw M1 2H14V14H1Z;g M1 4H14M1 7H14M1 9H14M1 12H14M5 2V14M10 2V14M1 3H14',
  chain: 'kw M1 8H8V15H1ZM3 10H6V13H3Z;kl M3 8L8 3H15V6L8 8Z;k M4 6L8 1H15V3', selbox: 'kw M0 1H7V8H0Z;kd M5 8H14V14H6Z;k O 9 10 3', spl: 'k M0 14C2 6 8 9 9 7S11 1 15 1;r M1 9H4;b M14 14L9 8M9 11V8H12', win: '-v M1 1H14V14Z;-d M1 1L14 14H1Z;kd M1 1H14V14H1Z', winwp: 'kt M1 3L12 14H1Z;T 4 7 7 WP', wincp: 'kv M1 1L13 14H1Z;T 6 7 7 CP', winp: 'v M1 3H8V6H5V9H8V8H12V14H7V12H1Z;T 10 7 7 P',
  backsel: 'g M0 2H10V5H4V8L0 5Z;gw M8 6V14L10 12L12 15L13 14L12 11H14Z', scat: 'rr M2 2H8L5 7Z;bb M8 14L13 9V14Z;rd M1 5L12 12', tris: 'kw M7 1L12 11H1Z;r M9 6L14 13H4Z', hat: 'gw O 7 4 3;g M5 7L1 10V13H14V10L10 7Z', xform: 'h M2 5H10V14H2ZM5 8H8V11H5Z;r M2 14L14 2;bd M1 1H14V14H1Z', keep: 'g M1 1H14V14H1ZM5 5H10V10H5ZM2 2L5 5M13 2L10 5M2 13L5 10M13 13L10 10', bend: 'g M1 5H7V3H14M1 5V14H11V6M4 7V11H8V6', mvup: 'g M1 5H10V14H1ZM4 8H7V11H4ZM13 1V8M11 3H15M11 6H15', xall: 'h M2 2H13V13H2ZM5 5H10V10H5Z;r M2 13L14 1;b M1 1L14 14;m 1 1 14 1 1 14 14 14'
};

function pathData(text) {
  const ellipse = (x, y, rx, ry) => `M${x - rx} ${y}a${rx} ${ry} 0 1 0 ${2 * rx} 0a${rx} ${ry} 0 1 0 ${-2 * rx} 0`;
  return text
    .replace(/O (\S+) (\S+) (\S+)/g, (m, x, y, r) => ellipse(+x, +y, +r, +r))
    .replace(/E (\S+) (\S+) (\S+) (\S+)/g, (m, x, y, a, b) => ellipse(+x, +y, +a, +b));
}

function icon(name) {
  let out = '';
  for (const part of ICONS[name].split(';')) {
    const cut = part.indexOf(' ');
    const style = part.slice(0, cut), rest = part.slice(cut + 1);
    if (style === 'T') {
      const [, x, y, size, label] = rest.match(/^(\S+) (\S+) (\S+) (.+)$/);
      const tint = label.match(/^(.+):(\w)$/);
      const tinted = tint && COLOURS[tint[2]];
      const serif = name === 'text' ? 'Liberation Serif' : 'Liberation Sans';
      out += `<text x="${x}" y="${y}" font-size="${size}" font-weight="${size > 10 ? 700 : 400}" font-family="${serif}" fill="${tinted || '#111'}" stroke="none">${tinted ? tint[1] : label}</text>`;
    } else if (/^[nmN]$/.test(style) && /^\d/.test(rest)) {
      const v = rest.split(' ').map(Number);
      const ink = { n: '#3434d8', m: '#777', N: '#e02020' }[style];
      for (let i = 0; i < v.length; i += 2) out += `<rect x="${v[i] - 1}" y="${v[i + 1] - 1}" width="2" height="2" fill="#fff" stroke="${ink}"/>`;
    } else {
      const dashed = style.length > 1 && style.endsWith('d') && style !== '-d';
      const fill = dashed || style.length < 2 ? 'none' : COLOURS[style[1]];
      const stroke = style[0] === '-' ? 'none' : COLOURS[style[0]];
      out += `<path d="${pathData(rest)}" fill="${fill}" stroke="${stroke}"${dashed ? ' stroke-dasharray="2 1"' : ''}/>`;
    }
  }
  return `<svg width="18" height="18" viewBox="-1 -1 18 18" aria-hidden="true"><g transform="translate(.5 .5)">${out}</g></svg>`;
}

for (const host of document.querySelectorAll('[data-tools]')) {
  host.innerHTML = host.dataset.tools.trim().split(/\s+/).map(token => {
    if (token === '|') return '<span class="sep"></span>';
    const name = token.replace(/[*>]/g, '');
    const cls = 'tool' + (token.includes('*') ? ' pressed' : '') + (token.includes('>') ? ' fly' : '');
    return `<button class="${cls}" aria-label="${name}">${icon(name)}</button>`;
  }).join('');
}
for (const tab of document.querySelectorAll('[data-icon]')) tab.insertAdjacentHTML('afterbegin', icon(tab.dataset.icon));

/* Rulers: one tick per 100 mm, drawn from the 9000 mm and 5000 mm marks. */
const STEP = 26.9;
function ticks(origin, from, to, draw) {
  let d = '';
  for (let k = from; k <= to; k++) d += draw(Math.round(origin + k * STEP) + 0.5, k % 10 === 0 ? 12 : k % 5 === 0 ? 5 : 3);
  return `<path d="${d}" stroke="#000"/>`;
}
document.getElementById('hruler').innerHTML =
  ticks(254, -9, 29, (p, n) => `M${p} 15v${-n}`) +
  [[9000, 256], [10000, 525], [11000, 794]].map(([v, x]) => `<text x="${x}" y="10">${v} mm</text>`).join('') +
  '<path d="M810.500 1v14" stroke="#c030c0"/>';
document.getElementById('vruler').innerHTML =
  ticks(270, -9, 8, (p, n) => `M15 ${p}h${-n}`) +
  '<text transform="translate(10 269) rotate(-90)">5000 mm</text><path d="M0 96.500h15" stroke="#c030c0"/>';

/* Glider: side view above, half plan view below. */
const topAt = [[416, 203], [420, 198], [432, 192], [448, 187], [475, 184], [492, 182], [510, 182], [540, 185], [580, 188], [620, 191], [650, 193], [697, 195]];
const bottomAt = [[416, 203], [422, 208], [440, 213], [475, 217], [500, 218], [530, 217], [570, 213], [620, 210], [680, 208], [706, 203]];
const at = (line, x) => {
  const i = Math.max(1, line.findIndex(p => p[0] >= x));
  const [a, b] = [line[i - 1], line[i]];
  return a[1] + (b[1] - a[1]) * (x - a[0]) / (b[0] - a[0]);
};
const draw = (d, c, extra = '') => `<path d="${d}" fill="none" stroke="${c}" ${extra}/>`;
const poly = line => 'M' + line.map(p => p.join(' ')).join('L');
let plan = draw(poly(topAt), '#20e0e8') + draw(poly(topAt), '#e08030', 'stroke-dasharray="18 10"') + draw(poly(bottomAt), '#e01020') + draw('M422 207L440 211L475 215L500 216L530 216L570 212L650 209', '#e08030') + draw('M422 206L440 210L475 214L530 214L650 208', '#30e0e0', 'stroke-dasharray="12 5"');
for (const x of [422, 432, 441, 456, 475, 491, 505, 519, 539, 553, 567, 582, 597, 612, 627, 641]) {
  const t = at(topAt, x), b = at(bottomAt, x), r = (b - t) / 2;
  const oval = dx => `<ellipse cx="${x + dx}" cy="${(t + b) / 2}" rx="${Math.min(8, r * 0.55)}" ry="${r}" fill="none" stroke="#10e4f0"/>`;
  plan += oval(4) + (x > 480 && x < 560 ? oval(-3) : '') + draw(`M${x + 0.5} ${t}V${b}`, '#20d020');
}
for (const x of [656, 671, 686, 694]) plan += `<ellipse cx="${x}" cy="201" rx="${x > 690 ? 3 : 4}" ry="7" fill="none" stroke="#b01020"/>` + draw(`M${x}.500 195V208`, '#2bbd2b');
plan += draw('M404 203.500H718', '#444') + draw('M450 203.500H505', '#b03030', 'stroke-dasharray="16 9"') + draw('M522 202.500H700', '#3030b8', 'stroke-dasharray="6 60 5 50 9 5 9 5 9 5"') +
  draw('M434 192L441 200L491 197L495 182M437 194L442 202L492 198L497 182', '#444') +
  draw('M499 190C510 186 540 188 549 192C530 193 510 193 499 190M500 189L548 192M510 188L535 191M502 192H548', '#000') +
  '<ellipse cx="527.500" cy="214" rx="6" ry="6" fill="none" stroke="#000"/>' +
  draw('M645 193L661 185L703 149L724 151L700 191L686 191L680 188L711 149', '#e08030') + draw('M685 191V194H698V205L706 203L698 200', '#e08030') + draw('M655 194L698 195V207L650 209', '#c01828') +
  draw('M404 306.500H718', '#20e020') +
  draw('M416 306C420 299 440 297 475 295Q530 292 600 300L685 305L712 306L680 309L600 314Q530 320 475 318C440 316 420 314 416 306', '#10dce8') +
  draw('M490 295H515M533 296L600 300L690 305.500M512 318H540M568 316L690 308', '#d88838', 'stroke-dasharray="20 9"') +
  draw('M497.500 319V614', '#d00018') + draw('M497 319.500H550', '#701018') + draw('M550 320L532 614.500H497', '#10e8f0') + draw('M541 479.500H529.500L522 614', '#d00018') +
  draw('M686 247.500H709L713 306L709 365.500H686L683 306ZM697.500 247V365', '#d00018') + draw('M686 247L693 244.500H701L709 247M686 365L692 368.500H703L709 365', '#222');
document.getElementById('canvas').innerHTML = `<g transform="translate(-44 -144)">${plan}</g>`;
```
